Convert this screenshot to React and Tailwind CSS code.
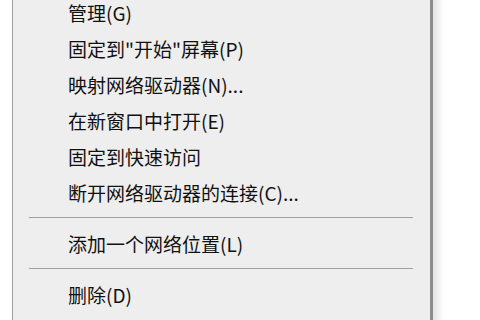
import React from "react";

const items = [
  { label: "管理(G)" },
  { label: "固定到\"开始\"屏幕(P)" },
  { label: "映射网络驱动器(N)..." },
  { label: "在新窗口中打开(E)" },
  { label: "固定到快速访问" },
  { label: "断开网络驱动器的连接(C)..." },
  { sep: true },
  { label: "添加一个网络位置(L)" },
  { sep: true },
  { label: "删除(D)" },
];

export default function App() {
  return (
    <div
      className="w-[480px] h-[320px] bg-white overflow-hidden"
      style={{ fontFamily: '"Noto Sans CJK SC", "Noto Sans", sans-serif' }}
    >
      <div className="-mt-[6px] ml-[12px] w-[421px] h-[340px] bg-[#eeeeee] border-l border-[#a0a0a0] border-r-[3px] border-r-[#8c8c8c] shadow-[5px_0_8px_rgba(0,0,0,0.12)]">
        {items.map((it, i) =>
          it.sep ? (
            <div key={i} className="h-[15px] flex items-center">
              <div className="ml-[16px] w-[384px] border-t border-[#a0a0a0]" />
            </div>
          ) : (
            <div
              key={i}
              className="h-[36px] flex items-center pl-[55px] text-[19px] text-[#111] leading-none"
            >
              {it.label}
            </div>
          )
        )}
      </div>
    </div>
  );
}
